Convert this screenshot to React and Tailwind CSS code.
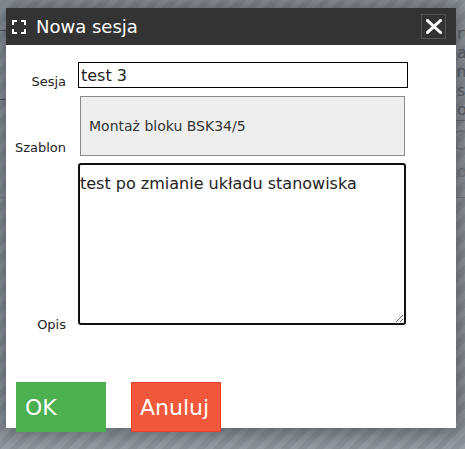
import React from 'react'

const font = { fontFamily: '"DejaVu Sans", Verdana, sans-serif' }

const FullscreenIcon = () => (
  <svg width="14" height="14" viewBox="0 0 14 14" fill="none" stroke="white" strokeWidth="2">
    <path d="M1 5V1h4M9 1h4v4M13 9v4H9M5 13H1V9" />
  </svg>
)

const CloseIcon = () => (
  <svg width="16" height="15" viewBox="0 0 16 15" fill="none" stroke="white" strokeWidth="3" strokeLinecap="square">
    <path d="M1.5 1.5l13 12M14.5 1.5l-13 12" />
  </svg>
)

const BackdropPage = () => (
  <div className="absolute inset-0 pointer-events-none">
    {/* page behind the overlay */}
    <div className="absolute left-0 top-[30px] w-[10px] h-px bg-[#4b5056]" />
    <div className="absolute left-0 top-[99px] w-[10px] h-px bg-[#4b5056]" />
    <div className="absolute left-0 top-[197px] w-[10px] h-px bg-[#7d838a]" />
    <div className="absolute left-[450px] top-[120px] w-[15px] h-px bg-[#6b7178]" />
    <div className="absolute left-[450px] top-[197px] w-[15px] h-px bg-[#7d838a]" />
    <div className="absolute left-[452px] top-[24px] flex flex-col text-[16px] leading-[19px] text-[#5f656c]">
      <span>&nbsp;rt</span>
      <span>&nbsp;as</span>
      <span>ım</span>
      <span>&nbsp;se</span>
      <span>&nbsp;oc</span>
    </div>
    <div className="absolute left-[451px] top-[130px] w-[20px] h-[20px] rounded-full border-2 border-[#7e848b]" />
    <div className="absolute left-[452px] top-[162px] text-[16px] leading-[19px] text-[#7e848b]">&nbsp;or</div>
  </div>
)

export default function App() {
  return (
    <div
      className="relative w-[465px] h-[449px] overflow-hidden bg-[#959ca4] bg-[repeating-linear-gradient(135deg,#8f969e_0px,#8f969e_6px,#9aa1a9_6px,#9aa1a9_12px)]"
      style={font}
    >
      <BackdropPage />
      <div className="relative ml-[6px] pt-2">
        <div className="w-[450px] h-[420px] bg-white shadow-[0_0_22px_6px_rgba(40,44,50,0.55)]">
          {/* header */}
          <div className="h-[37px] bg-[#333333] flex items-center pl-[6px] pr-[10px]">
            <FullscreenIcon />
            <span className="ml-[10px] text-[18px] text-white leading-none">Nowa sesja</span>
            <button className="ml-auto w-[25px] h-[25px] border border-[#555555] flex items-center justify-center">
              <CloseIcon />
            </button>
          </div>

          {/* form */}
          <div className="pt-[17px]">
            <div className="flex items-end">
              <label className="w-[60px] text-right text-[13px] leading-[15px] text-[#222] mb-[-1px]">Sesja</label>
              <input
                defaultValue="test 3"
                className="ml-[12px] w-[330px] h-[26px] border-[1.5px] border-black px-[2px] text-[16px] text-[#222] outline-none"
                style={font}
              />
            </div>

            <div className="flex items-end mt-[8px]">
              <label className="w-[60px] text-right text-[13px] leading-[15px] text-[#222] mb-px">Szablon</label>
              <div className="ml-[14px] w-[325px] h-[60px] border border-[#8a8a8a] bg-[#eeeeee] flex items-center pl-[8px] text-[14px] text-[#333]">
                Montaż bloku BSK34/5
              </div>
            </div>

            <div className="flex items-end mt-[7px]">
              <label className="w-[60px] text-right text-[13px] leading-[15px] text-[#222]">Opis</label>
              <textarea
                defaultValue="test po zmianie układu stanowiska"
                className="ml-[12px] mb-[7px] w-[328px] h-[162px] border-2 border-[#111] rounded-[3px] pt-[9px] px-0 text-[16px] leading-[19px] text-[#222] outline-none"
                style={font}
              />
            </div>

            <div className="flex mt-[50px] ml-[10px] gap-[25px]">
              <button className="w-[90px] h-[50px] bg-[#4caf50] text-white text-[22px] text-left pl-[9px]" style={font}>
                OK
              </button>
              <button className="w-[90px] h-[50px] bg-[#f0573b] border border-[#e8432a] text-white text-[22px] text-left pl-[8px]" style={font}>
                Anuluj
              </button>
            </div>
          </div>
        </div>
      </div>
    </div>
  )
}
